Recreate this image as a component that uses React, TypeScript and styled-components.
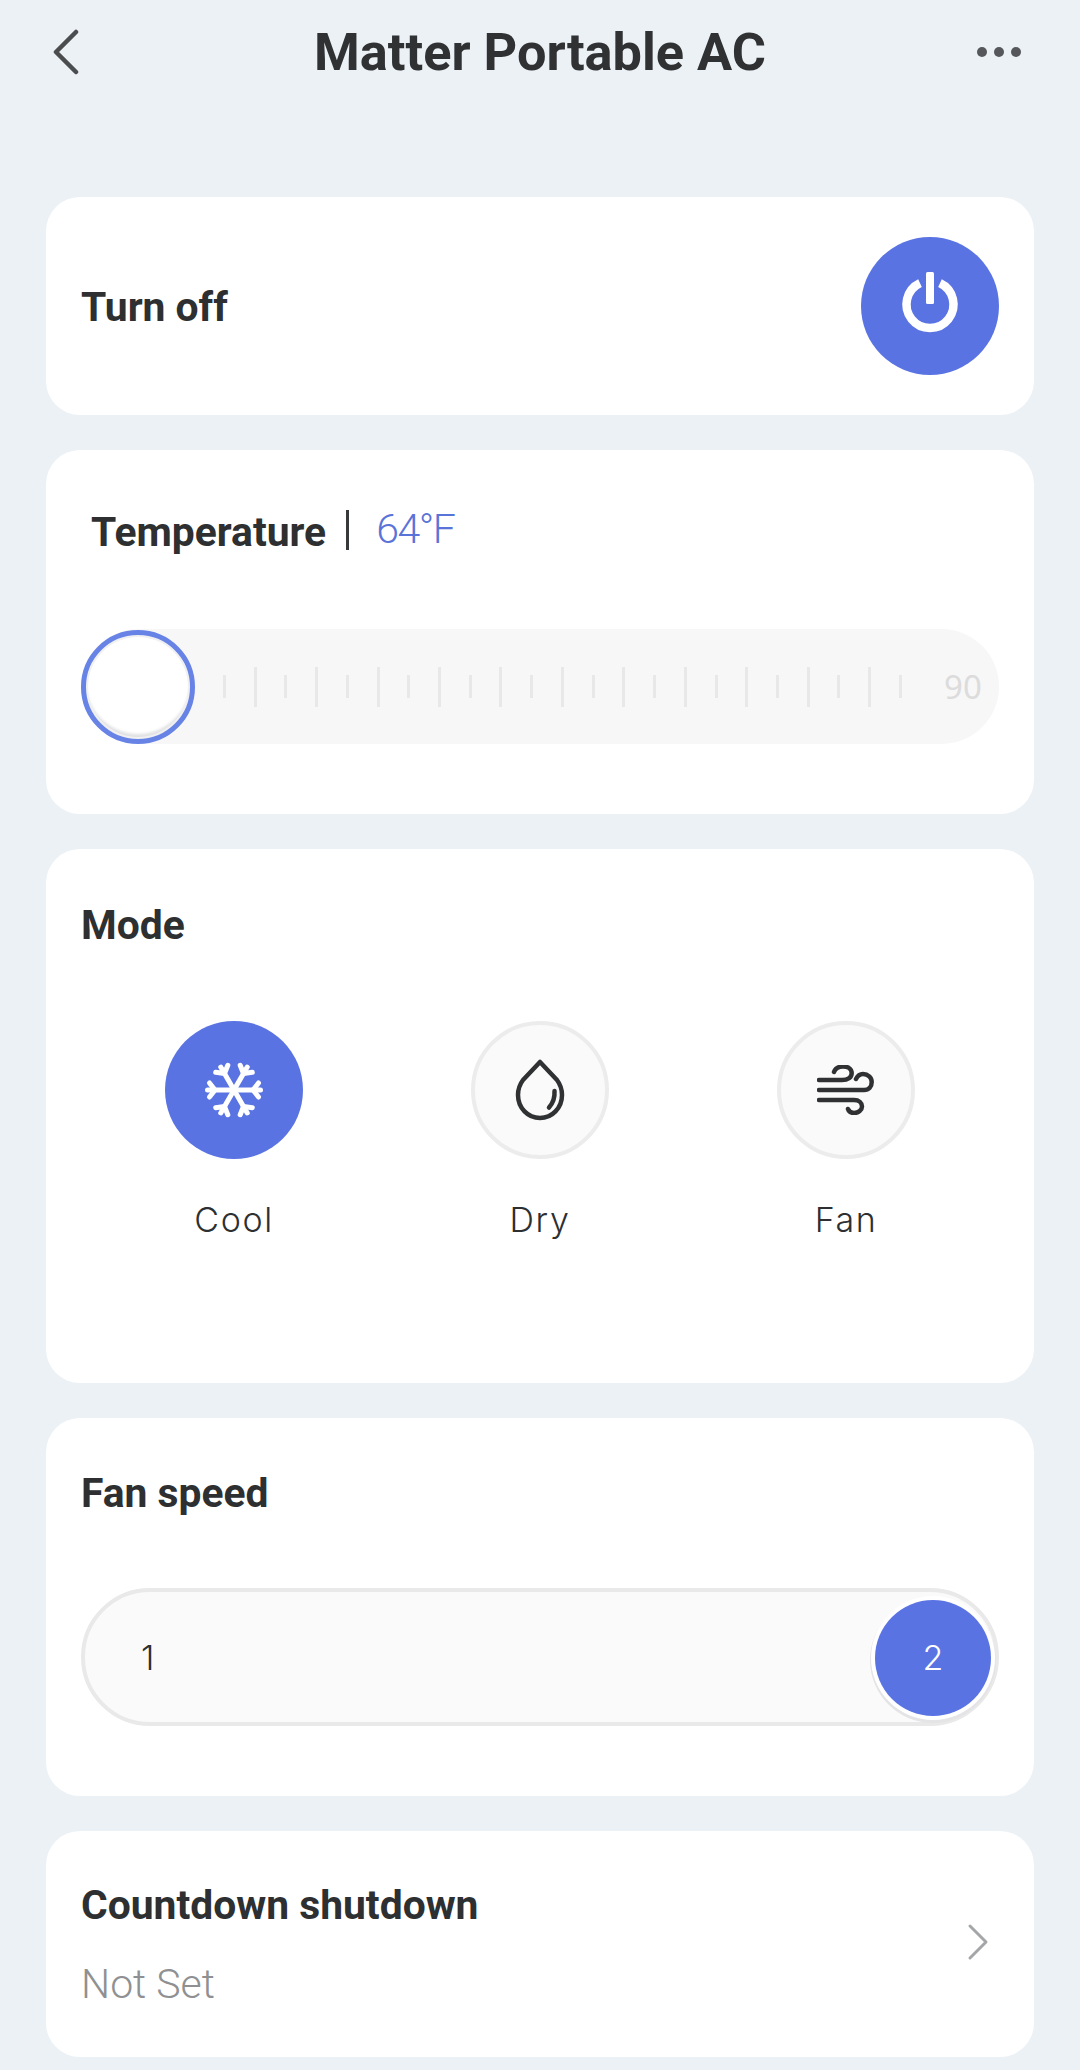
import React from "react";
import styled, { createGlobalStyle } from "styled-components";

const Global = createGlobalStyle`
  html, body { margin: 0; padding: 0; background: #ecf1f6; }
  body { font-family: Roboto, "Liberation Sans", sans-serif; color: #2d2f31; }
  * { box-sizing: border-box; }
`;

const BLUE = "#5a73e3";

const Page = styled.div`
  width: 1080px;
  height: 2070px;
  padding: 0 46px;
  overflow: hidden;
  background: #ecf1f6;
  display: flex;
  flex-direction: column;
`;
const Header = styled.header`
  height: 104px;
  margin: 0 6px 93px;
  display: flex;
  align-items: center;
  flex-shrink: 0;
`;
const HeaderSide = styled.div<{ $end?: boolean }>`
  flex: 1;
  display: flex;
  justify-content: ${(p) => (p.$end ? "flex-end" : "flex-start")};
`;
const HeaderIcon = styled.svg`
  display: block;
  flex-shrink: 0;
`;
const Title = styled.h1`
  margin: 0;
  font-size: 52.3px;
  line-height: 104px;
  font-weight: 700;
  color: #2f3133;
  white-space: nowrap;
`;
const Stack = styled.div`
  display: flex;
  flex-direction: column;
  gap: 35px;
`;
const Card = styled.section<{ $h: number }>`
  height: ${(p) => p.$h}px;
  background: #fff;
  border-radius: 34px;
  padding: 0 35px;
  flex-shrink: 0;
`;
const Heading = styled.h2`
  margin: 0;
  font-size: 40.8px;
  line-height: 50px;
  font-weight: 700;
  color: #2d2f31;
  white-space: nowrap;
`;
const PowerCard = styled(Card)`
  display: flex;
  align-items: center;
  justify-content: space-between;
  ${Heading} {
    margin-top: 2px;
  }
`;
const RoundButton = styled.div<{ $on?: boolean }>`
  width: 138px;
  height: 138px;
  border-radius: 50%;
  display: flex;
  align-items: center;
  justify-content: center;
  background: ${(p) => (p.$on ? BLUE : "#fafafa")};
  border: ${(p) => (p.$on ? "none" : "4px solid #ececec")};
`;
const TempRow = styled.div`
  padding: 57px 0 0 10px;
  height: 179px;
  display: flex;
  align-items: flex-start;
`;
const Divider = styled.span`
  width: 3px;
  height: 40px;
  margin: 3px 27px 0 20px;
  background: #37393b;
`;
const TempValue = styled.span`
  font-size: 41px;
  line-height: 44px;
  font-weight: 300;
  color: #5a73d8;
  letter-spacing: -1.5px;
`;
const Track = styled.div`
  width: 918px;
  height: 115px;
  border-radius: 58px;
  background: #f7f7f7;
  display: flex;
  align-items: center;
`;
const Thumb = styled.div`
  width: 114px;
  height: 114px;
  border-radius: 50%;
  background: #fff;
  border: 5px solid #6783e6;
  box-shadow: inset 0 0 0 2px #f0f0f0, inset 0 -5px 3px #e0e1e3;
  flex-shrink: 0;
  margin-right: 28px;
`;
const Ticks = styled.div`
  width: 679px;
  display: flex;
  align-items: center;
  justify-content: space-between;
`;
const Tick = styled.i<{ $long: boolean }>`
  display: block;
  width: 3px;
  height: ${(p) => (p.$long ? 40 : 23)}px;
  background: #e8e8e8;
`;
const TrackEnd = styled.span`
  margin-left: 42px;
  font-family: "Noto Sans", sans-serif;
  font-size: 33px;
  color: #dcdcdc;
`;
const Modes = styled.div`
  margin-top: 71px;
  display: grid;
  grid-template-columns: repeat(3, 1fr);
`;
const Mode = styled.div`
  display: flex;
  flex-direction: column;
  align-items: center;
`;
const ModeLabel = styled.span`
  margin-top: 41px;
  font-family: Inter, sans-serif;
  font-size: 34px;
  line-height: 40px;
  font-weight: 300;
  letter-spacing: 1.6px;
  color: #2d2f31;
`;
const HeadingBlock = styled.div<{ $top: number }>`
  padding-top: ${(p) => p.$top}px;
`;
const Speed = styled.div`
  margin-top: 70px;
  width: 918px;
  height: 138px;
  border-radius: 69px;
  background: #fafafa;
  border: 4px solid #e9e9e9;
  display: flex;
  align-items: center;
  justify-content: space-between;
  padding: 0 4px 0 56px;
`;
const SpeedLabel = styled.span`
  font-family: Inter, sans-serif;
  font-size: 34px;
  font-weight: 300;
  color: #2d2f31;
`;
const SpeedKnob = styled.div`
  width: 116px;
  height: 116px;
  margin-top: 1px;
  border-radius: 50%;
  background: ${BLUE};
  color: #fff;
  display: flex;
  align-items: center;
  justify-content: center;
  font-family: Inter, sans-serif;
  font-size: 34px;
  font-weight: 300;
  box-shadow: 0 0 0 4px #fff, 0 2px 0 5px #e4e4e6;
`;
const LinkCard = styled(Card)`
  display: flex;
  align-items: center;
  justify-content: space-between;
  padding-right: 45px;
`;
const LinkText = styled.div`
  display: flex;
  flex-direction: column;
  gap: 29px;
`;
const Muted = styled.span`
  font-size: 41px;
  line-height: 50px;
  font-weight: 300;
  color: #8f9092;
`;
const LinkChevron = styled.svg`
  display: block;
  margin-top: -4px;
`;

const Snowflake = () => (
  <svg width="60" height="60" viewBox="0 0 60 60" fill="none" stroke="#fff" strokeWidth="5" strokeLinecap="round" strokeLinejoin="round">
    {[30, 90, 150, 210, 270, 330].map((a) => (
      <g key={a} transform={`rotate(${a} 30 30)`}>
        <line x1="30" y1="30" x2="30" y2="3.500" />
        <polyline points="23,5.500 30,11 37,5.500" />
      </g>
    ))}
  </svg>
);

const Drop = () => (
  <svg width="50" height="62" viewBox="0 0 50 62" fill="none" stroke="#2f3133" strokeWidth="4.500" strokeLinecap="round" strokeLinejoin="round">
    <path d="M25 3L8 21C5 25 3 29 3 36C3 49 13 59 25 59C37 59 47 49 47 36C47 29 45 25 42 21Z" />
    <path d="M39.500 32C40 39 38 44 34 48.500" />
  </svg>
);

const Wind = () => (
  <svg width="58" height="50" viewBox="0 0 58 50" fill="none" stroke="#2f3133" strokeWidth="4.500" strokeLinecap="round">
    <path d="M2 15H25C31 15 34.700 12.500 34.700 8C34.700 4 31 1.500 26 1.500C22 1.500 18.500 3 17 7" />
    <path d="M2 25H47C52 25 54.700 21.500 54.700 17C54.700 12.500 51 9 46 9C43 9 40.500 11 39 14" />
    <path d="M2 35H37C42 35 45 38 45 41.500C45 45 41.500 48 37 48C34 48 32 47 31 44" />
  </svg>
);

const ticks = Array.from({ length: 23 }, (_, i) => i);

export default function App() {
  return (
    <Page>
      <Global />
      <Header>
        <HeaderSide>
          <HeaderIcon width="28" height="46" viewBox="0 0 28 46" fill="none" stroke="#4a4c4e" strokeWidth="4.500" strokeLinecap="round" strokeLinejoin="round">
            <polyline points="24,3 4,23 24,43" />
          </HeaderIcon>
        </HeaderSide>
        <Title>Matter Portable AC</Title>
        <HeaderSide $end>
          <HeaderIcon width="52" height="12" viewBox="0 0 52 12" fill="#55575a">
            <circle cx="6" cy="6" r="5" />
            <circle cx="23" cy="6" r="5" />
            <circle cx="40" cy="6" r="5" />
          </HeaderIcon>
        </HeaderSide>
      </Header>
      <Stack>
        <PowerCard $h={218}>
          <Heading>Turn off</Heading>
          <RoundButton $on>
            <svg width="64" height="72" viewBox="0 0 64 72" fill="none" stroke="#fff">
              <path d="M22 13.200A23.500 23.500 0 1 0 42 13.200" strokeWidth="8.500" />
              <rect x="28" y="2" width="8" height="32" rx="1.500" fill="#fff" stroke="none" />
            </svg>
          </RoundButton>
        </PowerCard>
        <Card $h={364}>
          <TempRow>
            <Heading>Temperature</Heading>
            <Divider />
            <TempValue>64°F</TempValue>
          </TempRow>
          <Track>
            <Thumb />
            <Ticks>
              {ticks.map((i) => (
                <Tick key={i} $long={i % 2 === 1} />
              ))}
            </Ticks>
            <TrackEnd>90</TrackEnd>
          </Track>
        </Card>
        <Card $h={534}>
          <HeadingBlock $top={51}>
            <Heading>Mode</Heading>
          </HeadingBlock>
          <Modes>
            <Mode>
              <RoundButton $on>
                <Snowflake />
              </RoundButton>
              <ModeLabel>Cool</ModeLabel>
            </Mode>
            <Mode>
              <RoundButton>
                <Drop />
              </RoundButton>
              <ModeLabel>Dry</ModeLabel>
            </Mode>
            <Mode>
              <RoundButton>
                <Wind />
              </RoundButton>
              <ModeLabel>Fan</ModeLabel>
            </Mode>
          </Modes>
        </Card>
        <Card $h={378}>
          <HeadingBlock $top={50}>
            <Heading>Fan speed</Heading>
          </HeadingBlock>
          <Speed>
            <SpeedLabel>1</SpeedLabel>
            <SpeedKnob>2</SpeedKnob>
          </Speed>
        </Card>
        <LinkCard $h={226}>
          <LinkText>
            <Heading>Countdown shutdown</Heading>
            <Muted>Not Set</Muted>
          </LinkText>
          <LinkChevron width="22" height="38" viewBox="0 0 22 38" fill="none" stroke="#a5a6a8" strokeWidth="3" strokeLinecap="round" strokeLinejoin="round">
            <polyline points="3,3 19,19 3,35" />
          </LinkChevron>
        </LinkCard>
      </Stack>
    </Page>
  );
}
